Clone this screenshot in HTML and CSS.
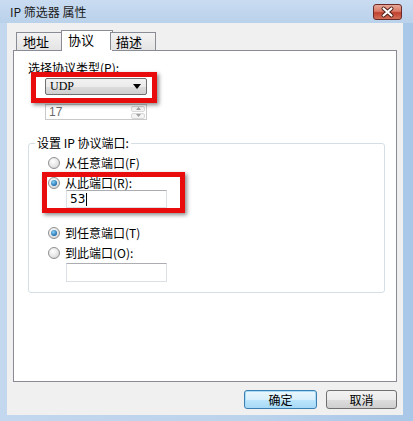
FILE: index.html
```html
<!DOCTYPE html>
<html>
  <head>
    <title>IP 筛选器 属性</title>
    <link rel="stylesheet" href="styles.css">
  </head>
  <body>
    <div class="window">
      <div class="titlebar">
        <span class="title">IP 筛选器 属性</span>
        <div class="close">
          <svg width="29" height="16" viewBox="0 0 29 16">
            <path d="M10.5 4.5 L18.5 11.5 M18.5 4.5 L10.5 11.5" stroke="#4a1c18" stroke-width="4" stroke-linecap="round"/>
            <path d="M10.5 4.5 L18.5 11.5 M18.5 4.5 L10.5 11.5" stroke="#ffffff" stroke-width="2.2" stroke-linecap="round"/>
          </svg>
        </div>
      </div>
      <div class="client">
        <div class="tabs">
          <div class="tab">地址</div>
          <div class="tab selected">协议</div>
          <div class="tab">描述</div>
        </div>
        <div class="panel">
          <div class="label">选择协议类型(P):</div>
          <div class="combo">
            <span>UDP</span>
            <svg width="8" height="5" viewBox="0 0 8 5"><path d="M0 0 H8 L4 5 Z" fill="#000"/></svg>
          </div>
          <div class="spin">
            <span>17</span>
            <div class="spin-btns">
              <div class="spin-btn"><svg width="5" height="3" viewBox="0 0 5 3"><path d="M0 3 H5 L2.5 0 Z" fill="#a0a0a0"/></svg></div>
              <div class="spin-btn"><svg width="5" height="3" viewBox="0 0 5 3"><path d="M0 0 H5 L2.5 3 Z" fill="#a0a0a0"/></svg></div>
            </div>
          </div>

          <fieldset class="group">
            <legend>设置 IP 协议端口:</legend>
            <div class="group-body">
              <div class="radio-row"><span class="radio"></span>从任意端口(F)</div>
              <div class="radio-row"><span class="radio checked"></span>从此端口(R):</div>
              <div class="textbox">53<span class="caret"></span></div>
              <div class="radio-row gap"><span class="radio checked"></span>到任意端口(T)</div>
              <div class="radio-row"><span class="radio"></span>到此端口(O):</div>
              <div class="textbox second"></div>
            </div>
          </fieldset>

          <div class="mark mark-type"></div>
          <div class="mark mark-port"></div>
        </div>
        <div class="buttons">
          <div class="btn default">确定</div>
          <div class="btn">取消</div>
        </div>
      </div>
    </div>
  </body>
</html>
```

FILE: styles.css
```css
body {
  margin: 0;
  font-family: "Noto Sans CJK SC", "DejaVu Sans", sans-serif;
  font-size: 12px;
  color: #000;
}

.window {
  width: 413px;
  height: 421px;
  display: flex;
  flex-direction: column;
  background: linear-gradient(to right, #c3d7ee, #bcd3ec 60%, #a9c7e8);
}

.titlebar {
  height: 23px;
  display: flex;
  justify-content: space-between;
  align-items: flex-start;
  padding: 0 11px 0 10px;
  background: linear-gradient(to bottom, #c9dcf1, #bad1eb);
}

.title {
  margin-top: 5px;
  line-height: 14px;
  font-size: 12px;
  color: #1a1a1a;
}

.close {
  margin-top: 4px;
  width: 29px;
  height: 16px;
  box-sizing: border-box;
  border: 1px solid #6b2a26;
  border-radius: 3px;
  background: linear-gradient(to bottom, #e8a898 0%, #d97967 45%, #c0402f 55%, #d2705a 100%);
  display: flex;
  align-items: center;
  justify-content: center;
}

.close svg {
  display: block;
  margin: -1px;
}

.client {
  flex: 1;
  margin: 0 10px 6px 7px;
  padding: 7px 6px 0 6px;
  background: #f0f0f0;
}

.tabs {
  height: 20px;
  display: flex;
  align-items: flex-end;
  padding-left: 3px;
  position: relative;
  z-index: 1;
}

.tab {
  height: 18px;
  box-sizing: border-box;
  border: 1px solid #898c95;
  border-bottom: none;
  background: linear-gradient(to bottom, #f3f3f3, #e4e4e4);
  font-size: 13px;
  line-height: 18px;
  padding: 0 6px;
  width: 46px;
}

.tab.selected {
  height: 21px;
  width: 52px;
  margin: 0 -2px -1px -1px;
  background: #ffffff;
  line-height: 17px;
  padding-left: 6px;
}

.tab + .tab {
  margin-left: -1px;
}

.tab.selected + .tab {
  padding-left: 5px;
}

.panel {
  position: relative;
  height: 332px;
  box-sizing: border-box;
  border: 1px solid #898c95;
  background: #ffffff;
  padding: 10px 0 0 14px;
}

.label {
  line-height: 13px;
  height: 13px;
}

.combo {
  margin: 4px 0 0 17px;
  width: 102px;
  height: 17px;
  box-sizing: border-box;
  border: 1px solid #707070;
  border-radius: 2px;
  background: linear-gradient(to bottom, #f2f2f2 0%, #ebebeb 50%, #dddddd 51%, #cfcfcf 100%);
  display: flex;
  align-items: center;
  justify-content: space-between;
  padding: 0 5px 0 4px;
  font-family: "Liberation Serif", serif;
  font-size: 12px;
}

.spin {
  margin: 9px 0 0 17px;
  width: 102px;
  height: 16px;
  box-sizing: border-box;
  border: 1px solid #c9c9c9;
  display: flex;
  align-items: center;
  justify-content: space-between;
  padding: 0 1px 0 3px;
  color: #6d6d6d;
  font-family: "Liberation Sans", sans-serif;
  font-size: 12px;
}

.spin-btns {
  display: flex;
  flex-direction: column;
  gap: 1px;
}

.spin-btn {
  width: 14px;
  height: 6px;
  box-sizing: border-box;
  border: 1px solid #d8d8d8;
  border-radius: 2px;
  background: #f4f4f4;
  display: flex;
  align-items: center;
  justify-content: center;
}

.spin-btn svg {
  display: block;
}

.group {
  margin: 16px 0 0 0;
  width: 357px;
  box-sizing: border-box;
  border: 1px solid #d5dfe5;
  border-radius: 3px;
  padding: 0;
}

.group legend {
  margin-left: 6px;
  padding: 0 2px;
  line-height: 14px;
}

.group-body {
  padding: 0 0 10px 19px;
}

.radio-row {
  display: flex;
  align-items: center;
  height: 14px;
  line-height: 14px;
  margin-top: 6px;
  gap: 5px;
}

.radio-row.gap {
  margin-top: 18px;
}

.radio {
  width: 12px;
  height: 12px;
  box-sizing: border-box;
  border-radius: 50%;
  border: 1px solid #8e8f8f;
  background: radial-gradient(circle at 40% 35%, #ffffff, #e6e6e6 55%, #c8c8c8);
  display: flex;
  align-items: center;
  justify-content: center;
}

.radio.checked::after {
  content: "";
  width: 6px;
  height: 6px;
  border-radius: 50%;
  background: radial-gradient(circle at 40% 35%, #8ad2f7, #1d6fb0 70%, #0d4d84);
}

.textbox {
  margin-left: 18px;
  width: 101px;
  height: 18px;
  box-sizing: border-box;
  border: 1px solid #dbdfe6;
  border-top-color: #abadb3;
  display: flex;
  align-items: center;
  padding-left: 3px;
  font-family: "DejaVu Sans", sans-serif;
  font-size: 12px;
}

.caret {
  display: inline-block;
  width: 1px;
  height: 13px;
  background: #000;
  margin-left: 1px;
}

.textbox.second {
  margin-top: 3px;
  height: 19px;
}

.mark {
  position: absolute;
  box-sizing: border-box;
  border: 5px solid #e80c0c;
  box-shadow: 2px 2px 4px rgba(0, 0, 0, 0.45);
}

.mark-type {
  left: 17px;
  top: 21px;
  width: 126px;
  height: 31px;
}

.mark-port {
  left: 28px;
  top: 121px;
  width: 143px;
  height: 41px;
}

.buttons {
  display: flex;
  justify-content: flex-end;
  gap: 9px;
  margin-top: 8px;
}

.btn {
  width: 71px;
  height: 19px;
  box-sizing: border-box;
  border: 1px solid #707070;
  border-radius: 3px;
  background: linear-gradient(to bottom, #f2f2f2 0%, #ebebeb 50%, #dddddd 51%, #cfcfcf 100%);
  text-align: center;
  line-height: 17px;
}

.btn.default {
  width: 73px;
  border-color: #3c7fb1;
  background: linear-gradient(to bottom, #eaf6fd 0%, #d9f0fc 50%, #bee6fd 51%, #a7d9f5 100%);
  box-shadow: inset 0 0 0 1px #a8dbf7;
}
```
